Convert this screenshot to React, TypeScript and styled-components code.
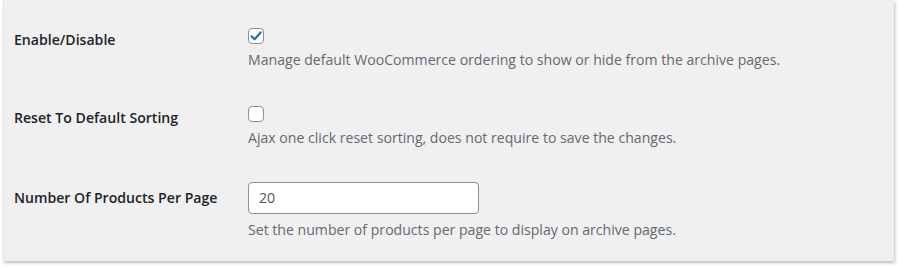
import styled, { createGlobalStyle } from 'styled-components';

const GlobalStyle = createGlobalStyle`
  html, body {
    margin: 0;
    padding: 0;
    background: #ffffff;
  }
  body {
    font-family: "Open Sans", "Noto Sans", sans-serif;
    font-size: 14.1px;
    color: #1d2327;
  }
`;

const Page = styled.div`
  width: 898px;
  height: 268px;
  padding: 0 3px 0 3px;
  box-sizing: border-box;
`;

const Card = styled.div`
  background: #f0f0f1;
  box-shadow: 1px 2px 3px rgba(0, 0, 0, 0.25);
  border-left: 1px solid #e6e6e7;
  width: 891px;
  height: 261px;
  box-sizing: border-box;
  padding: 9px 10px 0 10px;
  display: flex;
  flex-direction: column;
`;

const Row = styled.div<{ $gap: number }>`
  display: grid;
  grid-template-columns: 234px 1fr;
  padding-top: ${(p) => p.$gap}px;
`;

const Label = styled.div<{ $offset: number }>`
  font-weight: 600;
  line-height: 20px;
  padding-top: ${(p) => p.$offset}px;
  color: #1d2327;
`;

const Field = styled.div`
  display: flex;
  flex-direction: column;
  align-items: flex-start;
`;

const Box = styled.span`
  width: 16px;
  height: 16px;
  box-sizing: border-box;
  border: 1px solid #8c8f94;
  border-radius: 4px;
  background: #fff;
  display: flex;
  align-items: center;
  justify-content: center;
  margin-top: 19px;
`;

const TextInput = styled.div`
  width: 231px;
  height: 32px;
  box-sizing: border-box;
  border: 1px solid #8c8f94;
  border-radius: 4px;
  background: #fff;
  padding: 0 10px;
  line-height: 30px;
  color: #50575e;
  margin-top: 19px;
`;

const Description = styled.p`
  margin: 6px 0 0 0;
  line-height: 20px;
  color: #646970;
`;

function Checkbox({ checked }: { checked?: boolean }) {
  return (
    <Box>
      {checked && (
        <svg width="14" height="14" viewBox="0 0 14 14">
          <path d="M2.6 7.2 L5.6 10.2 L11.6 3.4" fill="none" stroke="#2271b1" strokeWidth="2.2" strokeLinecap="round" strokeLinejoin="round" />
        </svg>
      )}
    </Box>
  );
}

export default function App() {
  return (
    <>
      <GlobalStyle />
      <Page>
        <Card>
          <Row $gap={0}>
            <Label $offset={21}>Enable/Disable</Label>
            <Field>
              <Checkbox checked />
              <Description>Manage default WooCommerce ordering to show or hide from the archive pages.</Description>
            </Field>
          </Row>
          <Row $gap={17}>
            <Label $offset={21}>Reset To Default Sorting</Label>
            <Field>
              <Checkbox />
              <Description>Ajax one click reset sorting, does not require to save the changes.</Description>
            </Field>
          </Row>
          <Row $gap={15}>
            <Label $offset={25}>Number Of Products Per Page</Label>
            <Field>
              <TextInput>20</TextInput>
              <Description>Set the number of products per page to display on archive pages.</Description>
            </Field>
          </Row>
        </Card>
      </Page>
    </>
  );
}
